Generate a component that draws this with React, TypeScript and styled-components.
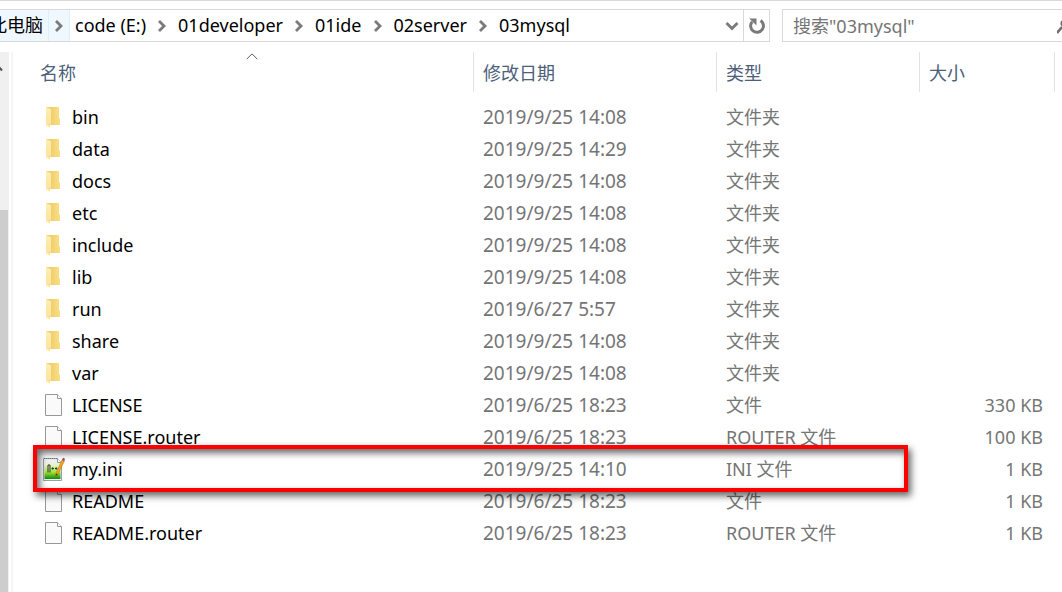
import React from 'react';
import styled, { createGlobalStyle } from 'styled-components';

const GlobalStyle = createGlobalStyle`
  * { box-sizing: border-box; }
  body {
    margin: 0;
    background: #fff;
    font-family: "Noto Sans", "Noto Sans CJK SC", sans-serif;
    font-size: 18px;
    color: #000;
  }
  button, input { font: inherit; color: inherit; }
`;

const Window = styled.div`
  display: flex;
  flex-direction: column;
  min-height: 100vh;
  overflow: hidden;
  border-top: 1px solid #d9d9d9;
`;

const TopBar = styled.header`
  display: flex;
  gap: 12px;
  padding: 8px 0 10px;
`;

const AddressBar = styled.nav`
  display: flex;
  flex: 1;
  min-width: 0;
  height: 33px;
  border: 1px solid #d9d9d9;
  border-left: 0;
`;

const Crumbs = styled.ol`
  display: flex;
  flex: 1;
  min-width: 0;
  margin: 0 0 0 -16px;
  padding: 0;
  list-style: none;
`;

const Crumb = styled.li<{ $active?: boolean }>`
  display: flex;
  background: ${(p) => (p.$active ? '#f0f8ff' : 'transparent')};
  button + button {
    border-left: 1px solid ${(p) => (p.$active ? '#dcefff' : 'transparent')};
    border-right: 1px solid ${(p) => (p.$active ? '#dcefff' : 'transparent')};
  }
`;

const CrumbButton = styled.button`
  padding: 0 5px;
  border: 0;
  background: none;
  line-height: 31px;
  white-space: nowrap;
`;

const IconButton = styled.button<{ $width: number; $divided?: boolean }>`
  display: flex;
  align-items: center;
  justify-content: center;
  flex: none;
  width: ${(p) => p.$width}px;
  padding: 0;
  border: 0;
  border-left: ${(p) => (p.$divided ? '1px solid #d9d9d9' : '0')};
  background: none;
`;

const SearchBox = styled.label`
  display: flex;
  align-items: center;
  flex: none;
  width: 280px;
  height: 33px;
  padding-left: 10px;
  border: 1px solid #d9d9d9;
  border-right: 0;
`;

const SearchInput = styled.input`
  flex: 1;
  min-width: 0;
  padding: 0;
  border: 0;
  outline: 0;
  background: none;
  &::placeholder { color: #757575; opacity: 1; }
`;

const Body = styled.div`
  display: flex;
  flex: 1;
`;

const ScrollTrack = styled.div`
  display: flex;
  flex-direction: column;
  flex: none;
  width: 9px;
  background: #f0f0f0;
`;

const ScrollArrow = styled.div`
  height: 158px;
  padding-top: 13px;
  svg { display: block; }
`;

const ScrollThumb = styled.div`
  flex: 1;
  width: 8px;
  background: #cdcdcd;
`;

const FilePane = styled.main`
  flex: 1;
  min-width: 0;
  margin-left: 2px;
  padding: 0 7px 0 18px;
  border-left: 2px solid #f5f5f5;
`;

const FileTable = styled.table`
  width: 100%;
  table-layout: fixed;
  border-collapse: separate;
  border-spacing: 0;
  tbody::before { content: ''; display: block; height: 9px; }
`;

const HeadCell = styled.th<{ $width?: number }>`
  position: relative;
  width: ${(p) => (p.$width ? p.$width + 'px' : 'auto')};
  height: 40px;
  padding: 0 0 0 9px;
  border-right: 1px solid #e2e2e2;
  color: #4c607a;
  font-weight: 400;
  text-align: left;
`;

const SortMark = styled.svg`
  position: absolute;
  top: 1px;
  left: 50%;
  margin-left: -6px;
`;

const Row = styled.tr`
  position: relative;
`;

const Cell = styled.td<{ $latin?: boolean; $right?: boolean }>`
  height: 32px;
  padding: ${(p) => (p.$right ? '0 12px 0 0' : '0 0 0 9px')};
  color: #757575;
  font-size: ${(p) => (p.$latin ? 19 : 18)}px;
  font-weight: 400;
  line-height: 32px;
  text-align: ${(p) => (p.$right ? 'right' : 'left')};
  white-space: nowrap;
`;

const NameCell = styled(Cell)`
  padding-left: 12px;
  color: #000;
`;

const NameContent = styled.div`
  display: flex;
  align-items: center;
  gap: 7px;
  height: 32px;
`;

const Highlight = styled.div`
  position: absolute;
  z-index: 1;
  top: -8px;
  right: 147px;
  bottom: -7px;
  left: 2px;
  border: 4px solid #f00;
  box-shadow: 3px 4px 7px rgba(0, 0, 0, 0.6), inset 3px 4px 7px rgba(0, 0, 0, 0.6);
  pointer-events: none;
`;

type Kind = 'folder' | 'file' | 'ini';
interface Entry { name: string; date: string; type: string; size?: string; kind: Kind }

const folder = (name: string, date = '2019/9/25 14:08'): Entry => ({ name, date, type: '文件夹', kind: 'folder' });

const entries: Entry[] = [
  folder('bin'),
  folder('data', '2019/9/25 14:29'),
  folder('docs'),
  folder('etc'),
  folder('include'),
  folder('lib'),
  folder('run', '2019/6/27 5:57'),
  folder('share'),
  folder('var'),
  { name: 'LICENSE', date: '2019/6/25 18:23', type: '文件', size: '330 KB', kind: 'file' },
  { name: 'LICENSE.router', date: '2019/6/25 18:23', type: 'ROUTER 文件', size: '100 KB', kind: 'file' },
  { name: 'my.ini', date: '2019/9/25 14:10', type: 'INI 文件', size: '1 KB', kind: 'ini' },
  { name: 'README', date: '2019/6/25 18:23', type: '文件', size: '1 KB', kind: 'file' },
  { name: 'README.router', date: '2019/6/25 18:23', type: 'ROUTER 文件', size: '1 KB', kind: 'file' },
];

const crumbs = ['此电脑', 'code (E:)', '01developer', '01ide', '02server', '03mysql'];

const GradientDefs = styled.svg`
  position: absolute;
`;

function Gradients() {
  return (
    <GradientDefs width="0" height="0" aria-hidden="true">
      <defs>
        <linearGradient id="folderBack" x1="0" y1="0" x2="1" y2="0">
          <stop offset="0.3" stopColor="#efcd6c" />
          <stop offset="1" stopColor="#fbdf86" />
        </linearGradient>
        <linearGradient id="folderFlap" x1="0" y1="0" x2="0" y2="1">
          <stop offset="0" stopColor="#ffeeb2" />
          <stop offset="1" stopColor="#fde294" />
        </linearGradient>
        <linearGradient id="iniGreen" x1="0" y1="0" x2="0" y2="1">
          <stop offset="0" stopColor="#eef0ee" />
          <stop offset="0.2" stopColor="#e4f3c4" />
          <stop offset="0.6" stopColor="#a6e03a" />
          <stop offset="0.8" stopColor="#4fba18" />
          <stop offset="1" stopColor="#11861c" />
        </linearGradient>
      </defs>
    </GradientDefs>
  );
}

function EntryIcon({ kind }: { kind: Kind }) {
  return (
    <svg width="22" height="24" viewBox="0 0 22 24" aria-hidden="true">
      {kind === 'folder' && (
        <>
          <path d="M3 2h13v11l1 1v6H3z" fill="url(#folderBack)" />
          <path d="M3 2l5 2.2v14.8l-1 .8v2.8L3 20z" fill="url(#folderFlap)" />
        </>
      )}
      {kind === 'file' && (
        <>
          <path d="M2.5 1.5h12l4 4v17h-16z" fill="#fafafa" stroke="#989898" />
          <path d="M14.5 1.5v4h4" fill="#fff" stroke="#989898" />
        </>
      )}
      {kind === 'ini' && (
        <>
          <path d="M.5 1.5h14l4 4v18H.5z" fill="#eef0f1" stroke="#9aa0a2" />
          <path d="M1 1.5h13" stroke="#6f7476" strokeDasharray="1 1" />
          <path d="M1.5 5h16v17h-16z" fill="url(#iniGreen)" />
          <path d="M14.5 1.5v4h4" fill="#fff" stroke="#8f9698" />
          <path d="M5 15.5V8h2v7.5" fill="none" stroke="#26332a" />
          <path d="M8.5 11.5h2.4M9.7 10.3v2.4M12 11.5h2.4M13.2 10.3v2.4" stroke="#26332a" />
          <path d="M12.5 19.5l.6-3.5L19 3l2.3 1.2-6.2 12.6z" fill="#f2a51e" stroke="#b8741a" strokeWidth="0.6" />
          <path d="M12.5 19.5l.6-3 1.7.8z" fill="#4b3a22" />
          <path d="M19 3l1-2.2 2 1-.7 2.4z" fill="#a9474b" />
        </>
      )}
    </svg>
  );
}

function Chevron() {
  return (
    <svg width="10" height="12" viewBox="0 0 10 12" fill="none" stroke="#7a7a7a" strokeWidth="2.8" aria-hidden="true">
      <path d="M2 1L7 6l-5 5" />
    </svg>
  );
}

export default function App() {
  return (
    <Window>
      <GlobalStyle />
      <Gradients />
      <TopBar>
        <AddressBar aria-label="地址">
          <Crumbs>
            {crumbs.map((label, i) => (
              <Crumb key={label} $active={i === 0}>
                <CrumbButton type="button">{label}</CrumbButton>
                {i < crumbs.length - 1 && (
                  <IconButton type="button" $width={22} aria-label={label + ' 子文件夹'}>
                    <Chevron />
                  </IconButton>
                )}
              </Crumb>
            ))}
          </Crumbs>
          <IconButton type="button" $width={22} aria-label="历史记录">
            <svg width="14" height="10" viewBox="0 0 14 10" fill="none" stroke="#7a7a7a" strokeWidth="2.8" aria-hidden="true">
              <path d="M1.5 2L7 7.5 12.5 2" />
            </svg>
          </IconButton>
          <IconButton type="button" $width={26} $divided aria-label="刷新">
            <svg width="18" height="18" viewBox="0 0 18 18" fill="none" aria-hidden="true">
              <path d="M12.6 3.6A6.4 6.4 0 1 1 4.2 4.7" stroke="#7a7a7a" strokeWidth="3" />
              <path d="M1.2 1.4H8.5V8.5z" fill="#7a7a7a" />
            </svg>
          </IconButton>
        </AddressBar>
        <SearchBox>
          <SearchInput type="text" aria-label="搜索" placeholder={'搜索"03mysql"'} />
          <svg width="5" height="20" viewBox="0 0 5 20" fill="none" stroke="#6d6d6d" strokeWidth="2.6" aria-hidden="true">
            <path d="M0 17l5-6" />
            <path d="M5 5q-1.5 2 0 5" strokeWidth="1.6" />
          </svg>
        </SearchBox>
      </TopBar>
      <Body>
        <ScrollTrack>
          <ScrollArrow>
            <svg width="4" height="7" viewBox="0 0 4 7" fill="none" stroke="#505050" strokeWidth="2" aria-hidden="true">
              <path d="M-3 5.5L-1 2 2 5.5" />
            </svg>
          </ScrollArrow>
          <ScrollThumb />
        </ScrollTrack>
        <FilePane>
          <FileTable>
            <thead>
              <tr>
                <HeadCell scope="col" aria-sort="ascending">
                  名称
                  <SortMark width="12" height="7" viewBox="0 0 12 7" fill="none" stroke="#606060" aria-hidden="true">
                    <path d="M.8 6L6 .9 11.2 6" />
                  </SortMark>
                </HeadCell>
                <HeadCell scope="col" $width={243}>修改日期</HeadCell>
                <HeadCell scope="col" $width={203}>类型</HeadCell>
                <HeadCell scope="col" $width={135}>大小</HeadCell>
              </tr>
            </thead>
            <tbody>
              {entries.map((e) => (
                <Row key={e.name}>
                  <NameCell>
                    <NameContent>
                      <EntryIcon kind={e.kind} />
                      {e.name}
                    </NameContent>
                    {e.kind === 'ini' && <Highlight />}
                  </NameCell>
                  <Cell $latin>{e.date}</Cell>
                  <Cell>{e.type}</Cell>
                  <Cell $right>{e.size}</Cell>
                </Row>
              ))}
            </tbody>
          </FileTable>
        </FilePane>
      </Body>
    </Window>
  );
}
